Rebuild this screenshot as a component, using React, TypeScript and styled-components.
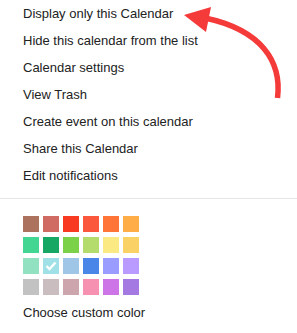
import React from "react";
import styled, { createGlobalStyle } from "styled-components";

const Global = createGlobalStyle`
  html, body { margin: 0; padding: 0; background: #fff; }
  body { font-family: Arial, "Liberation Sans", sans-serif; }
`;

const Menu = styled.div`
  position: relative;
  width: 297px;
  height: 333px;
  background: #fff;
  overflow: hidden;
`;

const Item = styled.div`
  height: 27px;
  line-height: 27px;
  padding-left: 23px;
  font-size: 13px;
  color: #222;
  white-space: nowrap;
`;

const Separator = styled.div`
  height: 1px;
  background: #e5e5e5;
  margin: 9px 0 17px;
`;

const Grid = styled.div`
  display: grid;
  grid-template-columns: repeat(6, 16px);
  grid-auto-rows: 16px;
  column-gap: 4px;
  row-gap: 5px;
  padding-left: 23px;
  margin-bottom: 4px;
`;

const Swatch = styled.div<{ $c: string }>`
  width: 16px;
  height: 16px;
  background: ${(p) => p.$c};
  display: flex;
  align-items: center;
  justify-content: center;
`;

const Arrow = styled.svg`
  position: absolute;
  left: 0;
  top: 0;
  pointer-events: none;
`;

const items = [
  "Display only this Calendar",
  "Hide this calendar from the list",
  "Calendar settings",
  "View Trash",
  "Create event on this calendar",
  "Share this Calendar",
  "Edit notifications",
];

const colors = [
  "#ac725e", "#d06b64", "#f83a22", "#fa573c", "#ff7537", "#ffad46",
  "#42d692", "#16a765", "#7bd148", "#b3dc6c", "#fbe983", "#fad165",
  "#92e1c0", "#9fe1e7", "#9fc6e7", "#4986e7", "#9a9cff", "#b99aff",
  "#c2c2c2", "#cabdbf", "#cca6ac", "#f691b2", "#cd74e6", "#a47ae2",
];

export default function App() {
  return (
    <>
      <Global />
      <Menu>
        {items.map((t) => (
          <Item key={t}>{t}</Item>
        ))}
        <Separator />
        <Grid>
          {colors.map((c, i) => (
            <Swatch key={i} $c={c}>
              {i === 13 && (
                <svg width="12" height="10" viewBox="0 0 12 10">
                  <path d="M1.5 5 L4.5 8 L10.5 1.5" stroke="#fff" strokeWidth="2.4" fill="none" />
                </svg>
              )}
            </Swatch>
          ))}
        </Grid>
        <Item>Choose custom color</Item>
        <Arrow width="297" height="333" viewBox="0 0 297 333">
          <path
            d="M277.5 98 C282 62 262 30 205 18"
            stroke="#f53a3a"
            strokeWidth="5.5"
            fill="none"
          />
          <polygon points="184,15 211,7 206,32" fill="#f53a3a" />
        </Arrow>
      </Menu>
    </>
  );
}
